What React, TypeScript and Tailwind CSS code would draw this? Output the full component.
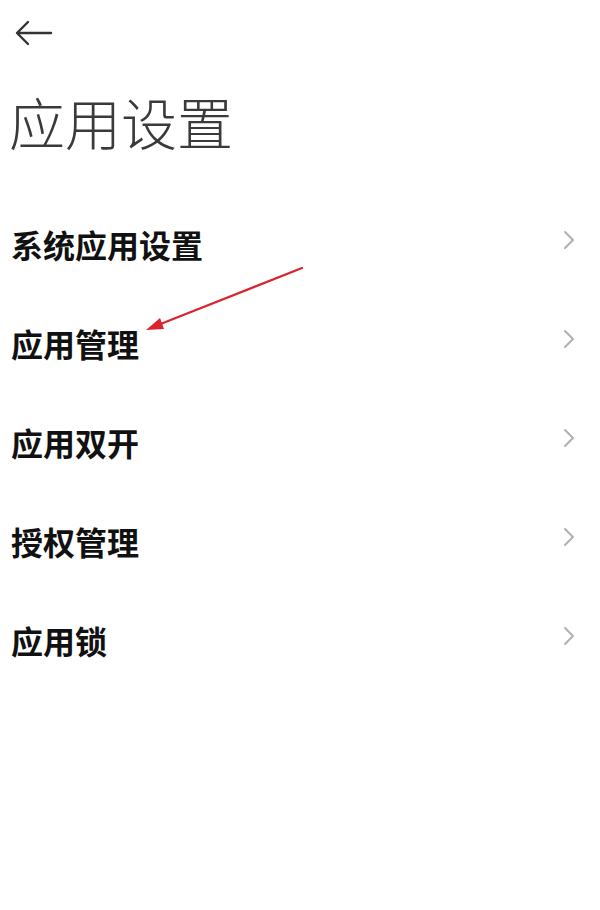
import React from "react";

const items = ["系统应用设置", "应用管理", "应用双开", "授权管理", "应用锁"];

function Chevron() {
  return (
    <svg width="14" height="22" viewBox="0 0 14 22" fill="none">
      <path d="M3 3 L11 11 L3 19" stroke="#b0b0b0" strokeWidth="2" strokeLinecap="round" strokeLinejoin="round" />
    </svg>
  );
}

export default function App() {
  return (
    <div
      className="relative w-[600px] h-[910px] bg-white overflow-hidden"
      style={{ fontFamily: '"Noto Sans CJK SC", "Noto Sans", sans-serif' }}
    >
      <div className="pt-[20px] pl-[15px] h-[66px]">
        <svg width="38" height="26" viewBox="0 0 38 26" fill="none">
          <path d="M36 13 H3 M13 2 L2 13 L13 24" stroke="#333" strokeWidth="2.4" strokeLinecap="round" strokeLinejoin="round" />
        </svg>
      </div>
      <div className="pl-[9px] pt-[27px] h-[128px] text-[56px] leading-none font-light text-[#3a3a3a]">
        应用设置
      </div>
      <div className="flex flex-col">
        {items.map((t) => (
          <div key={t} className="h-[99px] flex items-center justify-between pl-[11px] pr-[24px]">
            <span className="text-[32px] font-bold text-[#111] leading-none">{t}</span>
            <div className="-mt-[8px]">
              <Chevron />
            </div>
          </div>
        ))}
      </div>
      <svg className="absolute left-0 top-0 pointer-events-none" width="600" height="910">
        <line x1="302" y1="268" x2="158" y2="325" stroke="#d9252b" strokeWidth="2.2" strokeLinecap="round" />
        <polygon points="146,330 160,318 164,329" fill="#d9252b" />
      </svg>
    </div>
  );
}
